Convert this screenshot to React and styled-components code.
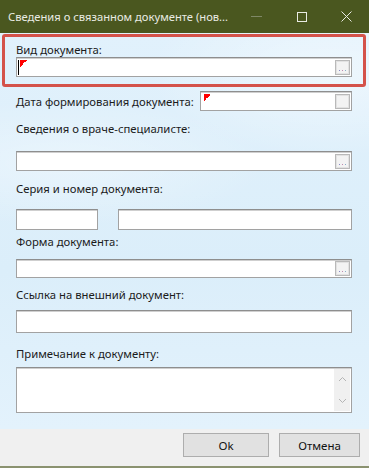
import styled, { createGlobalStyle } from "styled-components";

const GlobalStyle = createGlobalStyle`
  body {
    margin: 0;
    font-family: "Noto Sans", "Liberation Sans", sans-serif;
    font-size: 11.3px;
    color: #1b1b1b;
  }
`;

const Window = styled.div`
  width: 369px;
  height: 468px;
  display: flex;
  flex-direction: column;
  overflow: hidden;
  border-bottom: 2px solid #8b9270;
  box-sizing: border-box;
`;

const TitleBar = styled.div`
  height: 33px;
  flex: none;
  display: flex;
  align-items: center;
  background: #4a571f;
  color: #e9ebe3;
  padding-left: 8px;
`;

const TitleText = styled.div`
  flex: 1;
  font-size: 11.2px;
  white-space: nowrap;
`;

const CaptionButton = styled.div`
  width: 45px;
  height: 33px;
  display: flex;
  align-items: center;
  justify-content: center;
`;

const Body = styled.div`
  flex: 1;
  display: flex;
  flex-direction: column;
  padding: 1px 3px 0 2px;
  background:
    radial-gradient(ellipse 260px 120px at 330px 40px, rgba(255, 255, 255, 0.45), transparent 70%),
    radial-gradient(ellipse 300px 90px at 60px 130px, rgba(255, 255, 255, 0.35), transparent 70%),
    linear-gradient(180deg, #e1f1fc 0%, #dbeefa 60%, #e3f2fc 100%);
`;

const Highlight = styled.div`
  flex: none;
  border: 3px solid #d4524a;
  border-radius: 3px;
  padding: 5px 11px 7px 11px;
`;

const Fields = styled.div`
  display: flex;
  flex-direction: column;
  padding: 0 14px;
`;

const Label = styled.div`
  flex: none;
  font-size: 11.3px;
  line-height: 15px;
  white-space: nowrap;
  margin-top: ${(p) => p.$top || 0}px;
`;

const Input = styled.div`
  box-sizing: border-box;
  height: ${(p) => p.$h || 20}px;
  width: ${(p) => (p.$w ? p.$w + "px" : "auto")};
  flex: ${(p) => (p.$grow ? "1" : "none")};
  margin-top: ${(p) => p.$top || 0}px;
  background: #fff;
  border: 1px solid #a2a2a2;
  border-top-color: #8e8e8e;
  box-shadow: inset 0 1px 0 #cfcfcf;
  display: flex;
  align-items: center;
  padding: 0 1px 0 1px;
`;

const Caret = styled.div`
  width: 1px;
  height: 15px;
  background: #000;
  margin-right: 1px;
`;

const Flag = styled.div`
  width: 7px;
  height: 7px;
  align-self: flex-start;
  margin-top: 2px;
  margin-left: ${(p) => p.$left || 0}px;
  background: linear-gradient(135deg, #ff0000 50%, transparent 50%);
`;

const DotsButton = styled.div`
  box-sizing: border-box;
  width: 15px;
  height: 15px;
  margin-left: auto;
  background: #f3f3f3;
  border: 1px solid #b9b9b9;
  box-shadow: inset 0 0 0 1px #e2e2e2;
  display: flex;
  align-items: flex-end;
  justify-content: center;
  padding-bottom: 2px;
`;

const DateRow = styled.div`
  display: flex;
  align-items: center;
  justify-content: space-between;
  margin-top: 4px;
`;

const SeriesRow = styled.div`
  display: flex;
  gap: 20px;
  margin-top: 13px;
`;

const Memo = styled(Input)`
  align-items: stretch;
  padding: 1px 1px 1px 0;
`;

const ScrollBar = styled.div`
  width: 16px;
  margin-left: auto;
  background: #f0f0f0;
  display: flex;
  flex-direction: column;
  justify-content: space-between;
  align-items: center;
  padding: 7px 0;
`;

const Footer = styled.div`
  height: 37px;
  flex: none;
  background: #f0f0f0;
  display: flex;
  justify-content: flex-end;
  align-items: flex-start;
  gap: 10px;
  padding: 4px 9px 0 0;
  box-sizing: border-box;
`;

const Button = styled.div`
  box-sizing: border-box;
  width: ${(p) => p.$w}px;
  height: 24px;
  background: #e1e1e1;
  border: 1px solid #adadad;
  display: flex;
  align-items: center;
  justify-content: center;
  font-size: 11.5px;
  color: #111;
`;

const Dots = () => (
  <svg width="7" height="2" viewBox="0 0 7 2">
    <rect x="0" y="0" width="1" height="1" fill="#8a8ac8" />
    <rect x="3" y="0" width="1" height="1" fill="#c08ab0" />
    <rect x="6" y="0" width="1" height="1" fill="#8ab0c8" />
  </svg>
);

const Chevron = ({ up }) => (
  <svg width="9" height="6" viewBox="0 0 9 6">
    <polyline
      points={up ? "1,5 4.5,1.5 8,5" : "1,1 4.5,4.5 8,1"}
      fill="none"
      stroke="#b4b4b4"
      strokeWidth="1"
    />
  </svg>
);

export default function App() {
  return (
    <>
      <GlobalStyle />
      <Window>
        <TitleBar>
          <TitleText>Сведения о связанном документе (нов...</TitleText>
          <CaptionButton>
            <svg width="11" height="2" viewBox="0 0 11 2">
              <rect x="0" y="0" width="11" height="1" fill="#7f8866" />
            </svg>
          </CaptionButton>
          <CaptionButton>
            <svg width="10" height="10" viewBox="0 0 10 10">
              <rect x="0.5" y="0.5" width="9" height="9" fill="none" stroke="#e9ebe3" />
            </svg>
          </CaptionButton>
          <CaptionButton>
            <svg width="11" height="11" viewBox="0 0 11 11">
              <path d="M0.5 0.5 L10.5 10.5 M10.5 0.5 L0.5 10.5" stroke="#e9ebe3" strokeWidth="1" />
            </svg>
          </CaptionButton>
        </TitleBar>
        <Body>
          <Highlight>
            <Label>Вид документа:</Label>
            <Input>
              <Caret />
              <Flag />
              <DotsButton>
                <Dots />
              </DotsButton>
            </Input>
          </Highlight>
          <Fields>
            <DateRow>
              <Label>Дата формирования документа:</Label>
              <Input $w={152}>
                <Flag $left={2} />
                <DotsButton />
              </Input>
            </DateRow>
            <Label $top={10}>Сведения о враче-специалисте:</Label>
            <Input $top={15}>
              <DotsButton>
                <Dots />
              </DotsButton>
            </Input>
            <Label $top={10}>Серия и номер документа:</Label>
            <SeriesRow>
              <Input $w={82} $h={21} />
              <Input $grow $h={21} />
            </SeriesRow>
            <Label $top={4}>Форма документа:</Label>
            <Input $top={10} $h={19}>
              <DotsButton>
                <Dots />
              </DotsButton>
            </Input>
            <Label $top={9}>Ссылка на внешний документ:</Label>
            <Input $top={8} $h={23} />
            <Label $top={13}>Примечание к документу:</Label>
            <Memo $top={6} $h={46}>
              <ScrollBar>
                <Chevron up />
                <Chevron />
              </ScrollBar>
            </Memo>
          </Fields>
        </Body>
        <Footer>
          <Button $w={86}>Ok</Button>
          <Button $w={81}>Отмена</Button>
        </Footer>
      </Window>
    </>
  );
}
